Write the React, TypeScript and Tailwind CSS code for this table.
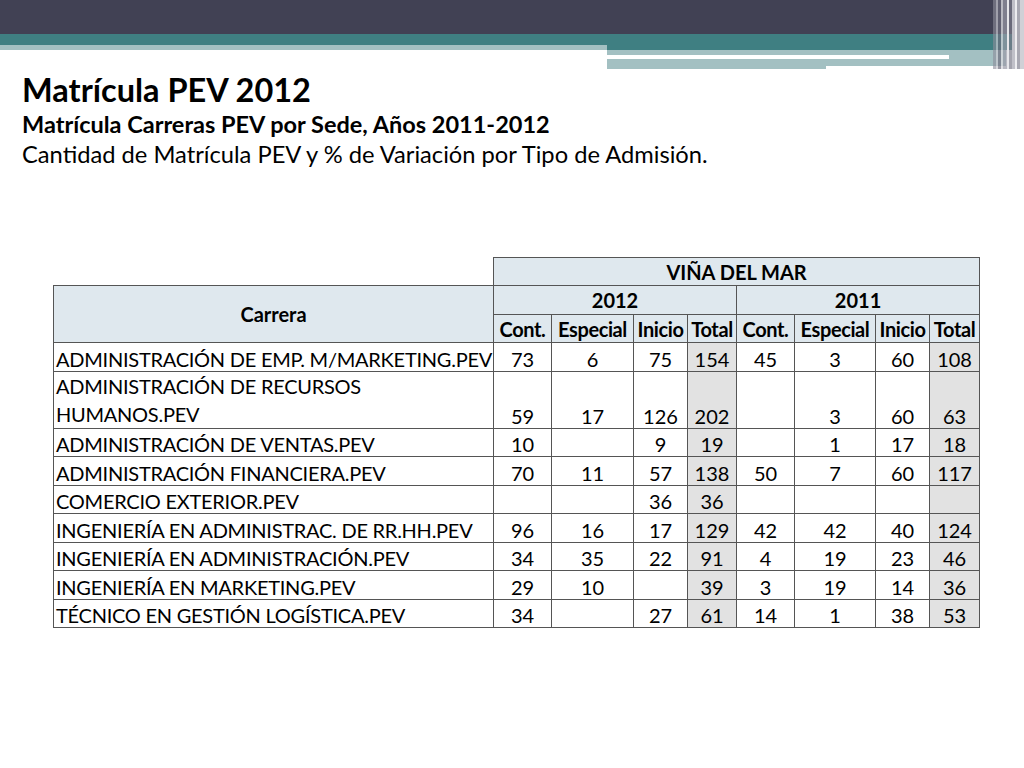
const rows: { name: string[]; v: (number | null)[] }[] = [
  { name: ["ADMINISTRACIÓN DE EMP. M/MARKETING.PEV"], v: [73, 6, 75, 154, 45, 3, 60, 108] },
  { name: ["ADMINISTRACIÓN DE RECURSOS", "HUMANOS.PEV"], v: [59, 17, 126, 202, null, 3, 60, 63] },
  { name: ["ADMINISTRACIÓN DE VENTAS.PEV"], v: [10, null, 9, 19, null, 1, 17, 18] },
  { name: ["ADMINISTRACIÓN FINANCIERA.PEV"], v: [70, 11, 57, 138, 50, 7, 60, 117] },
  { name: ["COMERCIO EXTERIOR.PEV"], v: [null, null, 36, 36, null, null, null, null] },
  { name: ["INGENIERÍA EN ADMINISTRAC. DE RR.HH.PEV"], v: [96, 16, 17, 129, 42, 42, 40, 124] },
  { name: ["INGENIERÍA EN ADMINISTRACIÓN.PEV"], v: [34, 35, 22, 91, 4, 19, 23, 46] },
  { name: ["INGENIERÍA EN MARKETING.PEV"], v: [29, 10, null, 39, 3, 19, 14, 36] },
  { name: ["TÉCNICO EN GESTIÓN LOGÍSTICA.PEV"], v: [34, null, 27, 61, 14, 1, 38, 53] },
]

const cols = ["Cont.", "Especial", "Inicio", "Total", "Cont.", "Especial", "Inicio", "Total"]
const widths = [440, 58, 82, 54, 49, 58, 81, 54, 50]

const Header = () => (
  <div className="relative h-[70px] w-full">
    <div className="h-[34px] bg-[#414154]" />
    <div className="flex">
      <div className="w-[607px]">
        <div className="h-[11px] bg-[#3f7f82]" />
        <div className="h-[5px] bg-[#a3c0c2]" />
      </div>
      <div className="flex-1">
        <div className="h-[16px] bg-[#3f7f82]" />
        <div className="w-[399px]">
          <div className="h-[5px] bg-[#a3c0c2]" />
          <div className="flex h-[4px]">
            <div className="w-[342px] bg-white" />
            <div className="flex-1 bg-[#a3c0c2]" />
          </div>
          <div className="h-[7px] bg-[#a3c0c2]" />
          <div className="h-[3px] w-[219px] bg-[#a3c0c2]" />
        </div>
      </div>
    </div>
    {/* vertical stripes on the right edge */}
    <div className="absolute right-0 top-0 flex h-[69px] w-[31px]">
      <div className="w-[3px] bg-[#8c8c99]/60" />
      <div className="w-[2px] bg-[#c9c9d0]/70" />
      <div className="w-[3px] bg-[#6e6e7d]/70" />
      <div className="w-[2px] bg-[#d8d8dd]/80" />
      <div className="w-[4px] bg-[#9a9aa6]/70" />
      <div className="w-[2px] bg-[#e6e6ea]" />
      <div className="w-[3px] bg-[#7c7c8a]/70" />
      <div className="w-[3px] bg-[#c0c0c8]" />
      <div className="w-[2px] bg-[#ededf0]" />
      <div className="w-[3px] bg-[#a8a8b2]" />
      <div className="w-[4px] bg-[#d0d0d6]" />
    </div>
  </div>
)

export default function App() {
  return (
    <div className="h-[768px] w-[1024px] overflow-hidden bg-white text-black" style={{ fontFamily: "Lato, 'Open Sans', sans-serif" }}>
      <Header />
      <div className="pl-[22px]">
        <h1 className="text-[32.5px] font-bold leading-[40px]">Matrícula PEV 2012</h1>
        <h2 className="text-[23.5px] font-bold leading-[29px]">Matrícula Carreras PEV por Sede, Años 2011-2012</h2>
        <p className="text-[23.7px] leading-[30px]">Cantidad de Matrícula PEV y % de Variación por Tipo de Admisión.</p>
      </div>
      <div className="pl-[53px] pt-[88px]">
        <table className="table-fixed border-collapse text-[20px] leading-[24px]" style={{ width: 927 }}>
          <colgroup>
            {widths.map((w, i) => (
              <col key={i} style={{ width: w }} />
            ))}
          </colgroup>
          <thead>
            <tr className="h-[28px]">
              <th className="border-0" />
              <th colSpan={8} className="border border-[#555] bg-[#dfe8ee] font-bold">VIÑA DEL MAR</th>
            </tr>
            <tr className="h-[29px]">
              <th rowSpan={2} className="border border-[#555] bg-[#dfe8ee] font-bold">Carrera</th>
              <th colSpan={4} className="border border-[#555] bg-[#dfe8ee] font-bold">2012</th>
              <th colSpan={4} className="border border-[#555] bg-[#dfe8ee] font-bold">2011</th>
            </tr>
            <tr className="h-[28px]">
              {cols.map((c, i) => (
                <th key={i} className="whitespace-nowrap border border-[#555] bg-[#dfe8ee] px-0 font-bold tracking-[-0.4px]">{c}</th>
              ))}
            </tr>
          </thead>
          <tbody>
            {rows.map((r, i) => (
              <tr key={i} className={r.name.length > 1 ? "h-[56px]" : "h-[28.5px]"}>
                <td className="whitespace-nowrap border border-[#555] px-[2px] align-bottom tracking-[-0.25px]">
                  {r.name.map((n, j) => (
                    <div key={j} className={r.name.length > 1 ? "leading-[28px]" : ""}>{n}</div>
                  ))}
                </td>
                {r.v.map((v, j) => (
                  <td key={j} className={`border border-[#555] text-center align-bottom ${j === 3 || j === 7 ? "bg-[#e2e2e2]" : ""}`}>
                    {v ?? ""}
                  </td>
                ))}
              </tr>
            ))}
          </tbody>
        </table>
      </div>
    </div>
  )
}
